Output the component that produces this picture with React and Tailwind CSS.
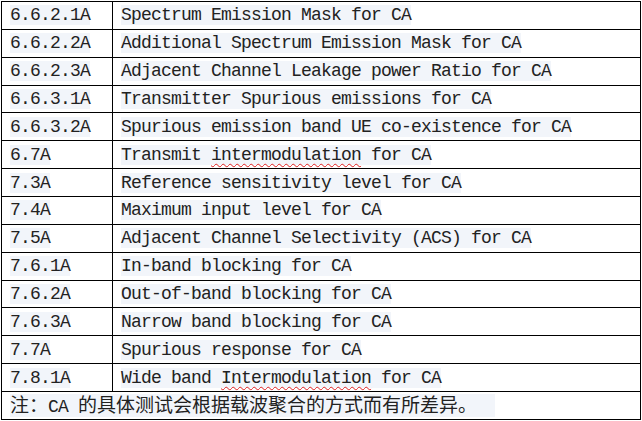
const rows = [
  ["6.6.2.1A", "Spectrum Emission Mask for CA"],
  ["6.6.2.2A", "Additional Spectrum Emission Mask for CA"],
  ["6.6.2.3A", "Adjacent Channel Leakage power Ratio for CA"],
  ["6.6.3.1A", "Transmitter Spurious emissions for CA"],
  ["6.6.3.2A", "Spurious emission band UE co-existence for CA"],
  ["6.7A", ["Transmit ", "intermodulation", " for CA"]],
  ["7.3A", "Reference sensitivity level for CA"],
  ["7.4A", "Maximum input level for CA"],
  ["7.5A", "Adjacent Channel Selectivity (ACS) for CA"],
  ["7.6.1A", "In-band blocking for CA"],
  ["7.6.2A", "Out-of-band blocking for CA"],
  ["7.6.3A", "Narrow band blocking for CA"],
  ["7.7A", "Spurious response for CA"],
  ["7.8.1A", ["Wide band ", "Intermodulation", " for CA"]],
];

const mono = "font-['Liberation_Mono',monospace] text-[18px] tracking-[-0.8px]";
const hl = "bg-[#f2f5fa] leading-[20px] whitespace-pre";
const cjk = "font-['Noto_Sans_CJK_SC',sans-serif] text-[19px]";

const Desc = ({ text }) => {
  if (typeof text === "string") return <span className={hl}>{text}</span>;
  return (
    <span className={hl}>
      {text[0]}
      <span className="underline decoration-wavy decoration-[#e02020] decoration-1 underline-offset-[3px]">
        {text[1]}
      </span>
      {text[2]}
    </span>
  );
};

export default function App() {
  return (
    <div className="w-[642px] h-[421px] bg-white pt-px pl-px text-[#222]">
      <div className="w-[640px] border border-black">
        {rows.map(([id, text]) => (
          <div key={id} className="flex h-[27.87px] border-b border-black">
            <div className={`w-[111px] border-r border-black pl-2 flex items-center ${mono}`}>
              <span className={hl}>{id}</span>
            </div>
            <div className={`flex-1 pl-2 flex items-center ${mono}`}>
              <Desc text={text} />
            </div>
          </div>
        ))}
        <div className="flex h-[26.87px] items-center pl-2">
          <span className="bg-[#f2f5fa] leading-[20px] whitespace-pre pr-[18px]">
            <span className={cjk}>注：</span>
            <span className={mono}>CA </span>
            <span className={cjk}>的具体测试会根据载波聚合的方式而有所差异。</span>
          </span>
        </div>
      </div>
    </div>
  );
}
